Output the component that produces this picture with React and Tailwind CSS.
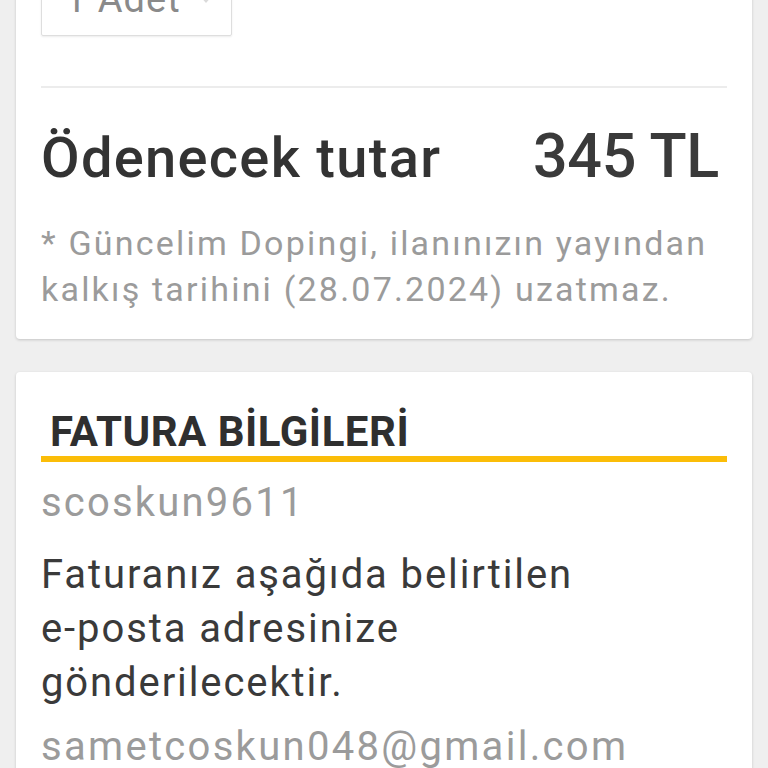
function Card({ className = '', children }) {
  return (
    <div className={`mx-4 bg-white rounded-[4px] shadow-[0_1px_3px_rgba(0,0,0,0.18)] px-[25px] ${className}`}>
      {children}
    </div>
  );
}

export default function App() {
  return (
    <div className="h-[768px] overflow-hidden bg-[#efefef] font-['Roboto','Liberation_Sans',sans-serif]">
      <Card className="-mt-[60px] pt-[22px] pb-[27px]">
        <div className="w-[191px] h-[74px] border border-[#dedede] rounded-[2px] shadow-[0_1px_2px_rgba(0,0,0,0.08)] flex items-center justify-between pl-[23px] pr-[18px]">
          <span className="text-[38px] tracking-[1px] text-[#8a8a8a] leading-[44px]">1 Adet</span>
          <span className="w-0 h-0 border-l-[7px] border-r-[7px] border-t-[8px] border-l-transparent border-r-transparent border-t-[#dadada]" />
        </div>
        <div className="mt-[50px] h-[2px] bg-[#ececec]" />
        <div className="mt-[36px] flex items-baseline justify-between text-[#333333] font-medium">
          <span className="text-[56px] leading-[64px] tracking-[1.3px]">Ödenecek tutar</span>
          <span className="text-[61px] leading-[64px] tracking-[-0.3px] pr-[8px] text-[#3a3a3a]">345 TL</span>
        </div>
        <p className="mt-[30px] text-[34px] leading-[46px] tracking-[2.2px] text-[#9b9b9b]">
          * Güncelim Dopingi, ilanınızın yayından<br />
          kalkış tarihini (28.07.2024) uzatmaz.
        </p>
      </Card>

      <Card className="mt-[33px] pt-[36px] pb-[40px]">
        <h2 className="pl-[9px] text-[42px] leading-[48px] font-bold text-[#2f2f2f] tracking-[0.5px]">FATURA BİLGİLERİ</h2>
        <div className="h-[6px] bg-[#fbbd08]" />
        <p className="mt-[19px] text-[40px] leading-[44px] tracking-[2.2px] text-[#9b9b9b]">scoskun9611</p>
        <p className="mt-[23px] text-[40px] leading-[54px] tracking-[1.9px] text-[#3a3a3a]">
          Faturanız aşağıda belirtilen<br />
          e-posta adresinize<br />
          gönderilecektir.
        </p>
        <p className="mt-[13px] text-[40px] leading-[48px] tracking-[2.3px] text-[#9b9b9b]">sametcoskun048@gmail.com</p>
      </Card>
    </div>
  );
}
